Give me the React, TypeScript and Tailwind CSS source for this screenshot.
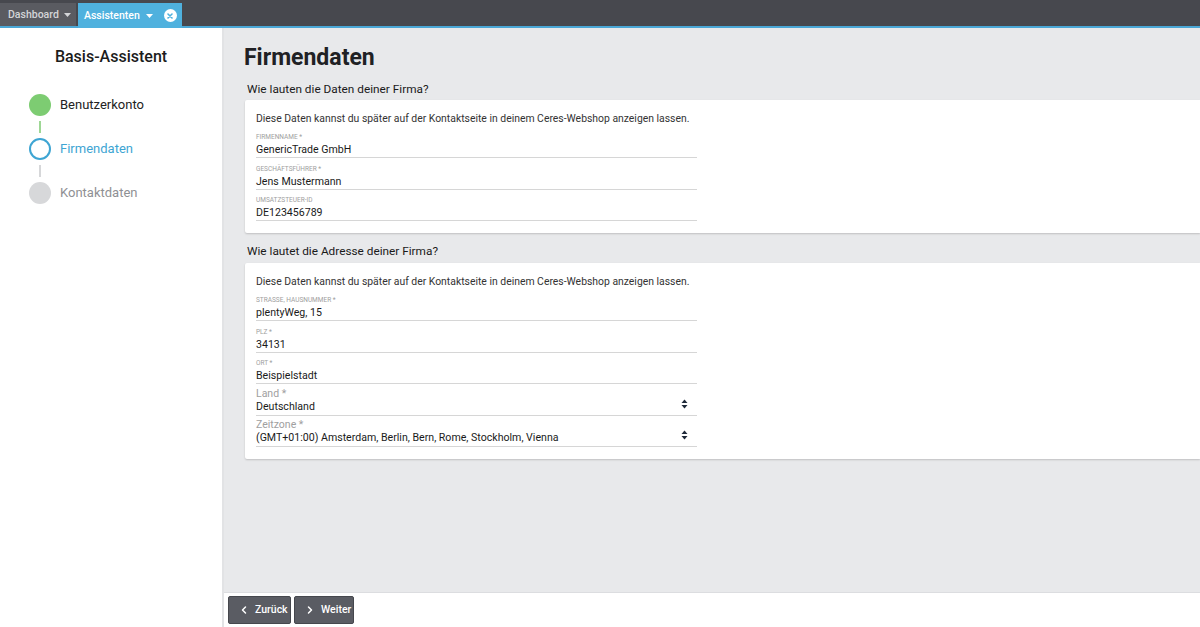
import { ChevronLeft, ChevronRight } from 'lucide-react';

type Field = { label: string; value: string; select?: boolean };

const firma: Field[] = [
  { label: 'FIRMENNAME *', value: 'GenericTrade GmbH' },
  { label: 'GESCHÄFTSFÜHRER *', value: 'Jens Mustermann' },
  { label: 'UMSATZSTEUER-ID', value: 'DE123456789' },
];

const adresse: Field[] = [
  { label: 'STRASSE, HAUSNUMMER *', value: 'plentyWeg, 15' },
  { label: 'PLZ *', value: '34131' },
  { label: 'ORT *', value: 'Beispielstadt' },
  { label: 'Land *', value: 'Deutschland', select: true },
  { label: 'Zeitzone *', value: '(GMT+01:00) Amsterdam, Berlin, Bern, Rome, Stockholm, Vienna', select: true },
];

function SortIcon() {
  return (
    <svg width="7" height="10" viewBox="0 0 7 10" className="text-gray-800">
      <path d="M3.5 0.5 L6.5 4 H0.5 Z" fill="currentColor" />
      <path d="M3.5 9.5 L6.5 6 H0.5 Z" fill="currentColor" />
    </svg>
  );
}

function FormField({ field }: { field: Field }) {
  return (
    <div className={`w-[441px] h-[31.5px] border-b border-[#d6d6d6] flex items-end ${field.select ? 'pb-[1px]' : 'pb-0'}`}>
      <div className="flex-1">
        {field.select ? (
          <div className="text-[10.5px] leading-[12px] text-[#a0a0a0]">{field.label}</div>
        ) : (
          <div className="text-[6.5px] leading-[9px] text-[#a0a0a0] mb-[1px]">{field.label}</div>
        )}
        <div className="text-[10.6px] leading-[14px] text-[#1a1a1a]">{field.value}</div>
      </div>
      {field.select && (
        <div className="mr-[9px] mb-[5px]">
          <SortIcon />
        </div>
      )}
    </div>
  );
}

function Card({ title, fields, first }: { title: string; fields: Field[]; first?: boolean }) {
  return (
    <>
      <div className={`text-[11.8px] text-[#1a1a1a] ml-[3px] leading-[16px] ${first ? 'mt-[9px]' : 'mt-[10px]'}`}>
        {title}
      </div>
      <div className={`${first ? 'mt-[3px]' : 'mt-[4px]'} ml-[1px] bg-white shadow-[0_1px_2px_rgba(0,0,0,0.18)] rounded-l-[2px] pl-[11px] pt-[10.5px] pb-[12px]`}>
        <div className="text-[10.4px] text-[#333] leading-[15px] mb-[1px]">
          Diese Daten kannst du später auf der Kontaktseite in deinem Ceres-Webshop anzeigen lassen.
        </div>
        {fields.map((f) => (
          <FormField key={f.label} field={f} />
        ))}
      </div>
    </>
  );
}

export default function App() {
  return (
    <div className="w-[1200px] h-[627px] overflow-hidden flex flex-col bg-white" style={{ fontFamily: 'Roboto, "Liberation Sans", sans-serif' }}>
      {/* Tab-Leiste */}
      <div className="h-[28px] bg-[#47484e] border-b-2 border-[#4aa7d6] flex items-end">
        <div className="h-[23px] w-[76px] bg-[#5a5b61] text-[#d4d5d8] text-[10.5px] flex items-center pl-[8px] gap-[5px] font-medium">
          Dashboard
          <svg width="7" height="4" viewBox="0 0 7 4"><path d="M0 0 H7 L3.5 4 Z" fill="currentColor" /></svg>
        </div>
        <div className="h-[25px] w-[104px] ml-[2px] bg-[#4fb1de] text-white text-[10.5px] font-medium flex items-center pl-[6px] -mb-[2px]">
          Assistenten
          <svg width="7" height="4" viewBox="0 0 7 4" className="ml-[6px]"><path d="M0 0 H7 L3.5 4 Z" fill="currentColor" /></svg>
          <span className="ml-[11px] w-[13px] h-[13px] rounded-full bg-white flex items-center justify-center">
            <svg width="6" height="6" viewBox="0 0 6 6"><path d="M1 1 L5 5 M5 1 L1 5" stroke="#4fb1de" strokeWidth="1.6" strokeLinecap="round" /></svg>
          </span>
        </div>
      </div>

      <div className="flex-1 flex min-h-0">
        {/* Seitenleiste */}
        <div className="w-[224px] border-r-2 border-[#e2e3e5] bg-white flex flex-col">
          <div className="text-center text-[16px] font-medium text-[#1c1c1c] mt-[17px]">Basis-Assistent</div>
          <div className="pl-[29px] mt-[25px]">
            <div className="flex items-center gap-[9px]">
              <span className="w-[22px] h-[22px] rounded-full bg-[#7dcc72]" />
              <span className="text-[13px] text-[#222]">Benutzerkonto</span>
            </div>
            <div className="ml-[10px] w-[2px] h-[12px] bg-[#9ed795] my-[5px]" />
            <div className="flex items-center gap-[9px]">
              <span className="w-[22px] h-[22px] rounded-full border-2 border-[#3ea5d3]" />
              <span className="text-[13px] text-[#3ea5d3]">Firmendaten</span>
            </div>
            <div className="ml-[10px] w-[2px] h-[12px] bg-[#d6d7d9] my-[5px]" />
            <div className="flex items-center gap-[9px]">
              <span className="w-[22px] h-[22px] rounded-full bg-[#d7d8da]" />
              <span className="text-[13px] text-[#8f9094]">Kontaktdaten</span>
            </div>
          </div>
        </div>

        {/* Hauptbereich */}
        <div className="flex-1 flex flex-col min-w-0">
          <div className="flex-1 bg-[#e8e9eb] pl-[20px] overflow-hidden">
            <h1 className="text-[23px] font-bold text-[#202124] mt-[16px] leading-[28px]">Firmendaten</h1>
            <Card title="Wie lauten die Daten deiner Firma?" fields={firma} first />
            <Card title="Wie lautet die Adresse deiner Firma?" fields={adresse} />
          </div>

          {/* Fußleiste */}
          <div className="h-[35px] bg-white border-t border-[#dcdde0] flex items-center gap-[3px] pl-[4px]">
            <button className="h-[28px] w-[63px] pl-[9px] bg-[#5a5c63] border border-[#45474d] text-white text-[10.5px] font-medium flex items-center gap-[5px] rounded-[2px]">
              <ChevronLeft size={12} strokeWidth={3} />
              Zurück
            </button>
            <button className="h-[28px] w-[60px] pl-[9px] bg-[#5a5c63] border border-[#45474d] text-white text-[10.5px] font-medium flex items-center gap-[5px] rounded-[2px]">
              <ChevronRight size={12} strokeWidth={3} />
              Weiter
            </button>
          </div>
        </div>
      </div>
    </div>
  );
}
